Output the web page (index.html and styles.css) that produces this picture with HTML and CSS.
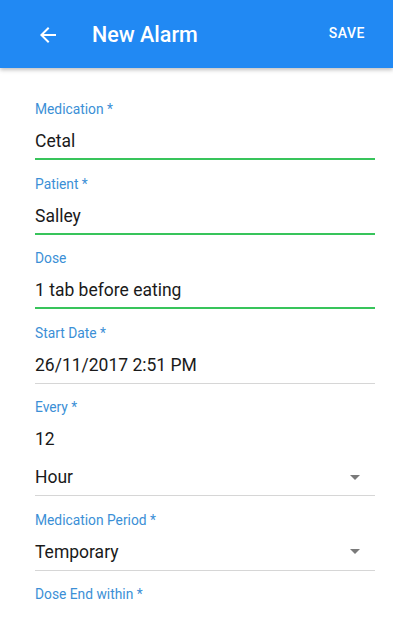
FILE: index.html
```html
<!DOCTYPE html>
<html>
<head>
<meta charset="utf-8">
<link rel="stylesheet" href="styles.css">
</head>
<body>
<header class="appbar">
  <svg class="back" width="24" height="24" viewBox="0 0 24 24"><path d="M20 11H7.83l5.59-5.59L12 4l-8 8 8 8 1.41-1.41L7.83 13H20v-2z" fill="#fff"/></svg>
  <h1 class="title">New Alarm</h1>
  <span class="save">SAVE</span>
</header>
<main class="form">
  <div class="field active">
    <label class="label">Medication *</label>
    <div class="value">Cetal</div>
  </div>
  <div class="field active">
    <label class="label">Patient *</label>
    <div class="value">Salley</div>
  </div>
  <div class="field active">
    <label class="label">Dose</label>
    <div class="value">1 tab before eating</div>
  </div>
  <div class="field">
    <label class="label">Start Date *</label>
    <div class="value">26/11/2017 2:51 PM</div>
  </div>
  <div class="field">
    <label class="label">Every *</label>
    <div class="value plain">12</div>
    <div class="value select">Hour<span class="caret"></span></div>
  </div>
  <div class="field">
    <label class="label">Medication Period *</label>
    <div class="value select">Temporary<span class="caret"></span></div>
  </div>
  <div class="field last">
    <label class="label">Dose End within *</label>
  </div>
</main>
</body>
</html>
```
FILE: styles.css
```css
* { box-sizing: border-box; }
html, body { margin: 0; padding: 0; }
body {
  width: 393px;
  height: 620px;
  overflow: hidden;
  background: #fff;
  font-family: Roboto, "Noto Sans", sans-serif;
  color: #212121;
}
.appbar {
  height: 68px;
  background: #2189f3;
  display: flex;
  align-items: center;
  padding: 0 28px 0 36px;
  box-shadow: 0 2px 4px rgba(0,0,0,0.25);
  position: relative;
  z-index: 1;
}
.back { flex: none; margin-top: 1px; }
.title {
  margin: 1px 0 0 32px;
  flex: 1;
  font-size: 21.5px;
  font-weight: 500;
  color: #fff;
}
.save {
  color: #fff;
  font-size: 14px;
  font-weight: 500;
  letter-spacing: 0.5px;
  margin-top: -2px;
}
.form {
  padding: 31px 18px 0 35px;
}
.field {
  display: flex;
  flex-direction: column;
  border-bottom: 1px solid #d6d6d6;
  margin-bottom: 13.5px;
}
.field.active { border-bottom: 2px solid #38c45b; }
.field.last { border-bottom: none; }
.label {
  font-size: 13.8px;
  color: #3b8fd6;
  line-height: 20px;
  height: 20px;
}
.value {
  font-size: 17.5px;
  line-height: 24px;
  margin-top: 10px;
  padding-bottom: 5px;
  color: #1a1a1a;
}
.field:not(.active) .value { padding-bottom: 6px; }
.field .value.plain { padding-bottom: 0; }
.value.select {
  display: flex;
  align-items: center;
  justify-content: space-between;
  margin-top: 14px;
}
.field .label + .value.select { margin-top: 10px; }
.caret {
  width: 0;
  height: 0;
  border-left: 5px solid transparent;
  border-right: 5px solid transparent;
  border-top: 5px solid #7a7a7a;
  margin-right: 15px;
}
```
